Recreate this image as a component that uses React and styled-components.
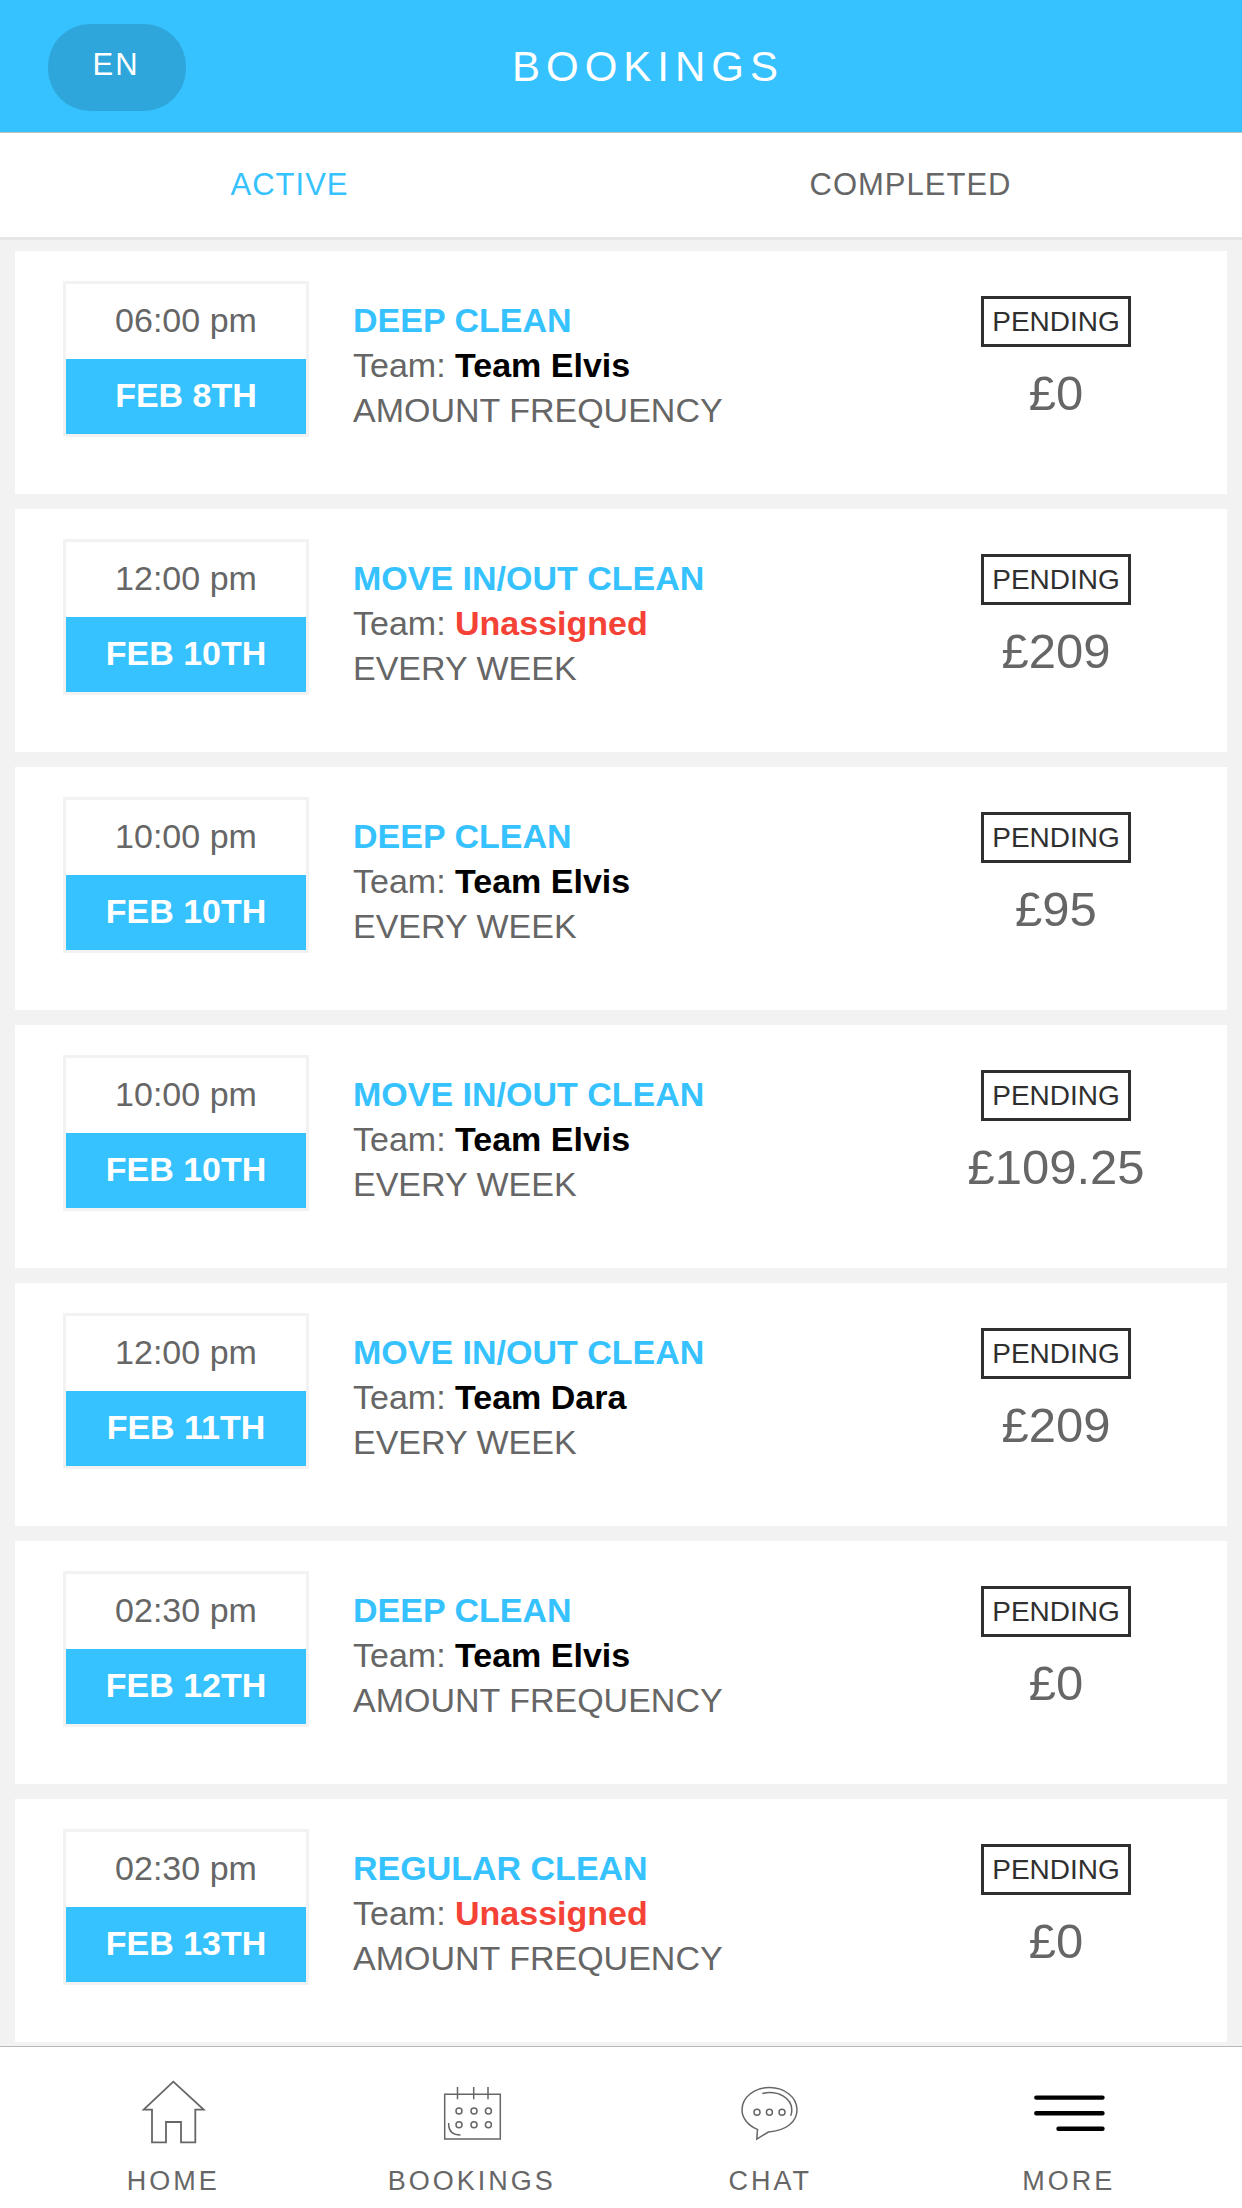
import React, { useState } from 'react';
import styled, { createGlobalStyle, ThemeProvider } from 'styled-components';

const theme = {
  primary: '#36c2ff',
  text: '#666666',
  dark: '#2f2f2f',
  danger: '#f44336',
  background: '#f2f2f2',
  fontSize: {
    xs: '27px',
    s: '28px',
    m: '31px',
    l: '34px',
    xl: '42px',
    xxl: '49px',
  },
};

const GlobalStyle = createGlobalStyle`
  *, *::before, *::after {
    box-sizing: border-box;
  }

  body {
    margin: 0;
    font-family: 'Liberation Sans', Arial, sans-serif;
    color: ${({ theme }) => theme.text};
    background: ${({ theme }) => theme.background};
  }

  button {
    border: none;
    padding: 0;
    background: none;
    font-family: inherit;
    cursor: pointer;
  }
`;

const StyledPage = styled.div`
  min-height: 100vh;
  display: flex;
  flex-direction: column;
`;

const StyledHeader = styled.header`
  display: flex;
  align-items: center;
  padding: 24px 132px 21px 48px;
  background: ${({ theme }) => theme.primary};
  border-bottom: 1px solid #b9c1c6;
`;

const StyledLanguage = styled.button`
  width: 138px;
  height: 87px;
  padding: 0 2px 6px 0;
  border-radius: 42px;
  background: rgba(0, 0, 0, 0.14);
  color: #fff;
  font-size: ${({ theme }) => theme.fontSize.m};
  letter-spacing: 2px;
`;

const StyledHeading = styled.h1`
  flex: 1;
  margin: 0;
  padding-bottom: 2px;
  color: #fff;
  font-size: ${({ theme }) => theme.fontSize.xl};
  font-weight: 400;
  line-height: 48px;
  letter-spacing: 6px;
  text-align: center;
`;

const StyledTabs = styled.div`
  display: flex;
  background: #fff;
  border-bottom: 3px solid #e6e6e6;
`;

const StyledTab = styled.button`
  flex: 1;
  height: 104px;
  padding-right: 42px;
  color: ${({ theme, $active }) => ($active ? theme.primary : theme.text)};
  font-size: ${({ theme }) => theme.fontSize.m};
  letter-spacing: 1px;
`;

const StyledList = styled.ul`
  flex: 1;
  display: flex;
  flex-direction: column;
  gap: 15px;
  margin: 0;
  padding: 11px 15px 4px;
  list-style: none;
`;

const StyledBooking = styled.li`
  display: flex;
  align-items: flex-start;
  padding: 30px 48px 57px;
  background: #fff;
`;

const StyledDate = styled.div`
  flex: 0 0 246px;
  border: 3px solid ${({ theme }) => theme.background};
  font-size: ${({ theme }) => theme.fontSize.l};
  line-height: 72px;
  text-align: center;
`;

const StyledTime = styled.div`
  padding-bottom: 3px;
`;

const StyledDay = styled.div`
  padding-bottom: 3px;
  background: ${({ theme }) => theme.primary};
  color: #fff;
  font-weight: 700;
`;

const StyledDetails = styled.div`
  flex: 1;
  padding: 17px 0 0 44px;
  font-size: ${({ theme }) => theme.fontSize.l};
  line-height: 45px;

  p {
    margin: 0;
  }
`;

const StyledService = styled.h2`
  margin: 0;
  color: ${({ theme }) => theme.primary};
  font-size: inherit;
  font-weight: 700;
`;

const StyledTeam = styled.strong`
  color: ${({ theme, $assigned }) => ($assigned ? '#000' : theme.danger)};
`;

const StyledSummary = styled.div`
  flex: 0 0 246px;
  display: flex;
  flex-direction: column;
  align-items: center;
  gap: 16px;
  padding-top: 15px;
`;

const StyledStatus = styled.span`
  padding: 0 8px;
  border: 3px solid ${({ theme }) => theme.dark};
  color: ${({ theme }) => theme.dark};
  font-size: ${({ theme }) => theme.fontSize.s};
  line-height: 45px;
`;

const StyledPrice = styled.span`
  font-size: ${({ theme }) => theme.fontSize.xxl};
  line-height: 60px;
`;

const StyledNav = styled.nav`
  display: flex;
  padding: 27px 24px 10px;
  background: #fff;
  border-top: 1px solid #b8b8b8;
`;

const StyledNavItem = styled.a`
  flex: 1;
  display: flex;
  flex-direction: column;
  align-items: center;
  gap: 19px;
  color: ${({ theme }) => theme.text};
  font-size: ${({ theme }) => theme.fontSize.xs};
  line-height: 33px;
  letter-spacing: 3px;
  text-decoration: none;
`;

const StyledIcon = styled.svg`
  width: 72px;
  height: 72px;
  fill: none;
  stroke: ${({ theme, $bold }) => ($bold ? '#000' : theme.text)};
`;

const HomeIcon = () => (
  <StyledIcon viewBox="0 0 72 72" strokeWidth="1.8" aria-hidden="true">
    <path d="M36.3 7.7 66.7 35.7H58.3V68.3H44V48H29V68.3H15V35.7H6.7Z" />
  </StyledIcon>
);

const CalendarIcon = () => (
  <StyledIcon viewBox="0 0 72 72" strokeWidth="1.5" aria-hidden="true">
    <path d="M8.7 20.3H64.3V65H8.7ZM21.5 13V25.3M37.7 13V25.3M52 13V25.3M12.7 49V51.5Q13.5 61 24.5 61" />
    {[37, 50.7].map(y =>
      [23, 38, 52.4].map(x => <circle key={`${x}-${y}`} cx={x} cy={y} r="3" />),
    )}
  </StyledIcon>
);

const ChatIcon = () => (
  <StyledIcon viewBox="0 0 72 72" strokeWidth="1.5" aria-hidden="true">
    <path d="M23.5 55.4 22.8 65.2 34.3 58C52 56.8 63 48 63 35.8C63 23.4 50.8 13.5 35.5 13.5S8 23.4 8 35.8C8 44.5 14.5 52 23.5 55.4Z" />
    <path d="M28.3 19.4C45 16 57.8 24.5 57.8 36Q57.8 39 56.7 41.7" />
    {[23, 35.4, 48].map(x => (
      <circle key={x} cx={x} cy="38.3" r="3" />
    ))}
  </StyledIcon>
);

const MoreIcon = () => (
  <StyledIcon $bold viewBox="0 0 72 72" strokeWidth="4.4" strokeLinecap="round" aria-hidden="true">
    <path d="M3.3 23.6H69.5M3.3 39.2H69.5M25.5 54.7H69.5" />
  </StyledIcon>
);

const bookings = [
  { id: 1, time: '06:00 pm', day: 'FEB 8TH', service: 'DEEP CLEAN', team: 'Team Elvis', frequency: 'AMOUNT FREQUENCY', price: '£0' },
  { id: 2, time: '12:00 pm', day: 'FEB 10TH', service: 'MOVE IN/OUT CLEAN', team: null, frequency: 'EVERY WEEK', price: '£209' },
  { id: 3, time: '10:00 pm', day: 'FEB 10TH', service: 'DEEP CLEAN', team: 'Team Elvis', frequency: 'EVERY WEEK', price: '£95' },
  { id: 4, time: '10:00 pm', day: 'FEB 10TH', service: 'MOVE IN/OUT CLEAN', team: 'Team Elvis', frequency: 'EVERY WEEK', price: '£109.25' },
  { id: 5, time: '12:00 pm', day: 'FEB 11TH', service: 'MOVE IN/OUT CLEAN', team: 'Team Dara', frequency: 'EVERY WEEK', price: '£209' },
  { id: 6, time: '02:30 pm', day: 'FEB 12TH', service: 'DEEP CLEAN', team: 'Team Elvis', frequency: 'AMOUNT FREQUENCY', price: '£0' },
  { id: 7, time: '02:30 pm', day: 'FEB 13TH', service: 'REGULAR CLEAN', team: null, frequency: 'AMOUNT FREQUENCY', price: '£0' },
];

const navItems = [
  { label: 'HOME', href: '#home', Icon: HomeIcon },
  { label: 'BOOKINGS', href: '#bookings', Icon: CalendarIcon },
  { label: 'CHAT', href: '#chat', Icon: ChatIcon },
  { label: 'MORE', href: '#more', Icon: MoreIcon },
];

const Booking = ({ time, day, service, team, frequency, price }) => (
  <StyledBooking>
    <StyledDate>
      <StyledTime>{time}</StyledTime>
      <StyledDay>{day}</StyledDay>
    </StyledDate>
    <StyledDetails>
      <StyledService>{service}</StyledService>
      <p>
        Team: <StyledTeam $assigned={Boolean(team)}>{team || 'Unassigned'}</StyledTeam>
      </p>
      <p>{frequency}</p>
    </StyledDetails>
    <StyledSummary>
      <StyledStatus>PENDING</StyledStatus>
      <StyledPrice>{price}</StyledPrice>
    </StyledSummary>
  </StyledBooking>
);

const App = () => {
  const [tab, setTab] = useState('ACTIVE');

  return (
    <ThemeProvider theme={theme}>
      <GlobalStyle />
      <StyledPage>
        <StyledHeader>
          <StyledLanguage type="button">EN</StyledLanguage>
          <StyledHeading>BOOKINGS</StyledHeading>
        </StyledHeader>
        <StyledTabs role="tablist">
          {['ACTIVE', 'COMPLETED'].map(name => (
            <StyledTab
              key={name}
              type="button"
              role="tab"
              aria-selected={tab === name}
              $active={tab === name}
              onClick={() => setTab(name)}
            >
              {name}
            </StyledTab>
          ))}
        </StyledTabs>
        <StyledList>
          {bookings.map(booking => (
            <Booking key={booking.id} {...booking} />
          ))}
        </StyledList>
        <StyledNav>
          {navItems.map(({ label, href, Icon }) => (
            <StyledNavItem key={label} href={href}>
              <Icon />
              <span>{label}</span>
            </StyledNavItem>
          ))}
        </StyledNav>
      </StyledPage>
    </ThemeProvider>
  );
};

export default App;
